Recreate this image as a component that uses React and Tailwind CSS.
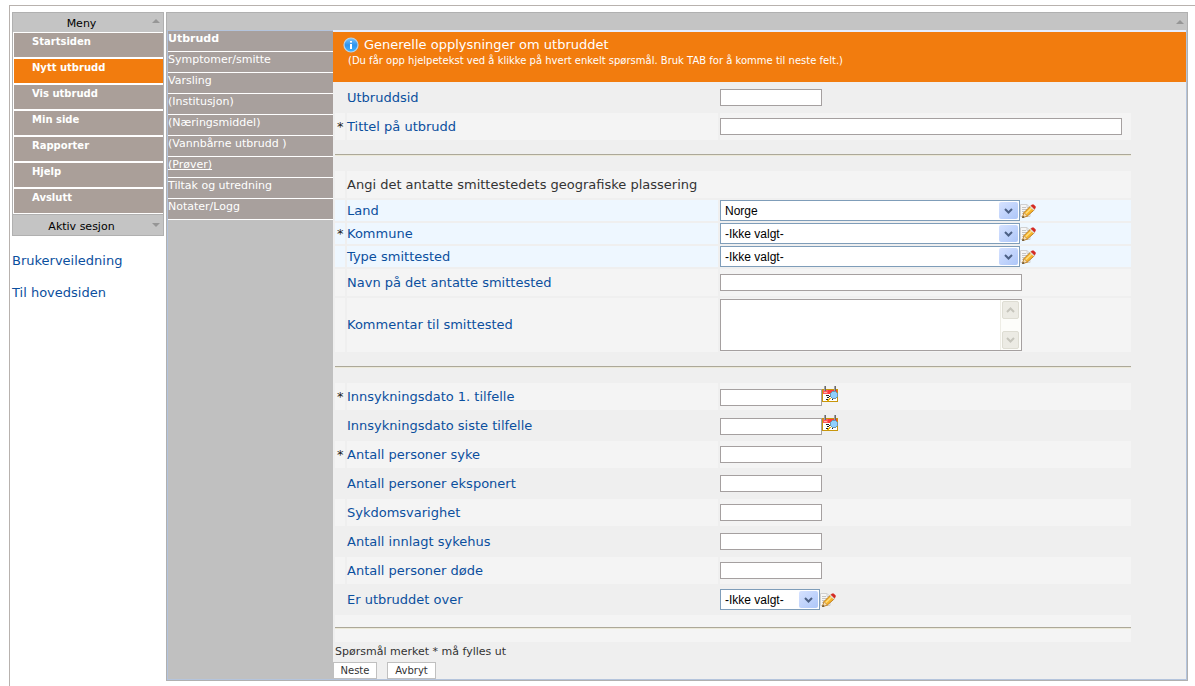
import { useState } from "react";

const menuItems = ["Startsiden", "Nytt utbrudd", "Vis utbrudd", "Min side", "Rapporter", "Hjelp", "Avslutt"];

const tabs = [
  "Utbrudd",
  "Symptomer/smitte",
  "Varsling",
  "(Institusjon)",
  "(Næringsmiddel)",
  "(Vannbårne utbrudd )",
  "(Prøver)",
  "Tiltak og utredning",
  "Notater/Logg",
];

const light = "bg-[#f4f4f4]";
const blue = "bg-[#eef7ff]";

function InfoIcon() {
  return (
    <svg width="16" height="16" viewBox="0 0 16 16" className="shrink-0" aria-hidden="true">
      <defs>
        <linearGradient id="info" x1="0" y1="0" x2="0" y2="1">
          <stop offset="0" stopColor="#7cc4f8" />
          <stop offset="0.5" stopColor="#2f94ee" />
          <stop offset="1" stopColor="#3fb4ff" />
        </linearGradient>
      </defs>
      <circle cx="8" cy="8" r="7" fill="url(#info)" stroke="#b9d3ea" strokeWidth="1.2" />
      <rect x="7" y="4" width="2" height="1.6" fill="#fff" />
      <path d="M7 7h2v5H7z" fill="#fff" />
    </svg>
  );
}

function EditIcon() {
  return (
    <svg width="16" height="16" viewBox="0 0 16 16" className="shrink-0" aria-hidden="true">
      <path d="M.5 1.5h6.5l3 3v9H.5z" fill="#f6f6f6" stroke="#d0d0d0" />
      <path d="M7 1.5v3h3" fill="none" stroke="#d0d0d0" />
      <path d="M2 4.5h4M2 6.5h5M2 8.5h3M2 10.5h2" stroke="#c4c4c4" />
      <path d="M2.6 14.4L4 9.6 10.6 3l4 3.6-7.4 6.6z" fill="#f7b52c" stroke="#b9771a" strokeWidth="0.9" />
      <path d="M5.6 10.8l6.8-6.6" stroke="#ffdf80" strokeWidth="1.4" />
      <path d="M2.6 14.4L4 9.6l3.4 3.5z" fill="#f3dcb4" stroke="#b9771a" strokeWidth="0.6" />
      <path d="M2.2 14.9l.8-2 1.4 1.3z" fill="#333" />
      <path d="M9.8 3.7l4 3.7 1-1-4-3.6z" fill="#dedede" />
      <path d="M10.7 2.8L12 1.4l1.7.1 2 2v1.4l-1.2 1.3z" fill="#d42a24" />
    </svg>
  );
}

function CalendarIcon() {
  return (
    <svg width="16" height="16" viewBox="0 0 16 16" shapeRendering="crispEdges" className="shrink-0" aria-hidden="true">
      <rect x="0" y="3" width="16" height="13" fill="#c8960c" />
      <rect x="1" y="4" width="14" height="11" fill="#fff" />
      <rect x="1" y="4" width="14" height="4" fill="#ff5a5a" />
      <rect x="6" y="4" width="9" height="4" fill="#ff3a3a" />
      <rect x="2" y="6" width="3" height="1" fill="#ffb0b0" />
      <rect x="2" y="0" width="1" height="5" fill="#a0a0a0" />
      <rect x="3" y="0" width="1" height="5" fill="#6a6a6a" />
      <rect x="12" y="0" width="1" height="5" fill="#a0a0a0" />
      <rect x="13" y="0" width="1" height="5" fill="#6a6a6a" />
      <path d="M4 9h3v1H4zM7 10h1v1H7zM5 11h2v1H5zM7 12h1v1H7zM4 13h3v1H4zM10 13h1v1h-1z" fill="#222" />
      <path d="M5 14h1v-1h1v-1h2v1H8v1H7v1H5z" fill="#f0b400" />
      <path d="M10 5h4v1h1v1h1v4h-1v1h-1v1h-4v-1H9v-1H8V7h1V6h1z" fill="#6f94ad" />
      <path d="M10 6h4v1h1v4h-1v1h-4v-1H9V7h1z" fill="#8fd0ff" />
    </svg>
  );
}

function Chevron({ up, color }) {
  return (
    <svg width="9" height="6" viewBox="0 0 9 6" aria-hidden="true">
      <path d={up ? "M1 5l3.5-3.5L8 5" : "M1 1l3.5 3.5L8 1"} fill="none" stroke={color} strokeWidth="2" />
    </svg>
  );
}

function Triangle({ up }) {
  return (
    <svg width="8" height="4" viewBox="0 0 8 4" aria-hidden="true">
      <path d={up ? "M0 4L4 0l4 4z" : "M0 0h8L4 4z"} fill="#969696" />
    </svg>
  );
}

function Row({ id, label, required, bg = "", children }) {
  return (
    <div className="grid grid-cols-[10px_371px_1fr] gap-0.5">
      <span className={`${bg} flex items-center pl-0.5 text-[13px] leading-4 text-[#222]`}>{required ? "*" : ""}</span>
      <label htmlFor={id} className={`${bg} flex items-center text-[13px] leading-4 text-[#0b4f9e]`}>
        {label}
      </label>
      <div className={`${bg} flex items-center`}>{children}</div>
    </div>
  );
}

function TextRow({ width = "w-[102px]", ...props }) {
  return (
    <Row {...props}>
      <div className="flex h-[27px] grow items-center">
        <input id={props.id} type="text" className={`${width} h-[17px] border border-[#a5a0a0] bg-white px-1 text-xs`} />
      </div>
    </Row>
  );
}

function DateRow(props) {
  return (
    <Row {...props}>
      <div className="flex h-[27px] items-start">
        <input id={props.id} type="text" className="mt-1.5 h-[17px] w-[102px] border border-[#a5a0a0] bg-white px-1 text-xs" />
        <button type="button" aria-label="Velg dato" className="mt-[3px]">
          <CalendarIcon />
        </button>
      </div>
    </Row>
  );
}

function SelectRow({ value, width = "w-[300px]", height = "h-[21px]", ...props }) {
  return (
    <Row {...props}>
      <div className={`${height} flex items-center`}>
        <div className={`${width} relative`}>
          <select
            id={props.id}
            className="block h-[21px] w-full appearance-none border border-[#7f9db9] bg-white pl-1 font-['Liberation_Sans',Arial,sans-serif] text-xs text-black"
          >
            <option>{value}</option>
          </select>
          <span className="pointer-events-none absolute top-0.5 right-0.5 flex h-[17px] w-[19px] items-center justify-center rounded-xs bg-gradient-to-br from-[#d6e2ff] to-[#adc6f8]">
            <Chevron color="#4d6185" />
          </span>
        </div>
        <button type="button" aria-label="Rediger">
          <EditIcon />
        </button>
      </div>
    </Row>
  );
}

function Divider({ bg = "" }) {
  return (
    <div className={`${bg} h-[27px] pt-3`}>
      <hr className="h-0.5 border-t border-b border-t-[#aca899] border-b-[#ece9d8]" />
    </div>
  );
}

function ScrollButton({ up }) {
  return (
    <span className="flex h-[18px] items-center justify-center rounded-xs border border-[#deddd3] bg-[#ecebe4]">
      <Chevron up={up} color="#c6c5bc" />
    </span>
  );
}

function Sidebar({ active, onSelect }) {
  return (
    <div className="w-[152px] shrink-0">
      <nav className="border border-[#b0b0b0] bg-[#c4c4c4] text-[11px] text-black">
        <div className="flex h-[19px] items-center">
          <span className="grow pt-0.5 pr-0.5 text-center leading-4">Meny</span>
          <span className="-mt-1 mr-[3px]">
            <Triangle up />
          </span>
        </div>
        <ul className="flex flex-col gap-0.5 border-t border-b border-l border-white bg-white">
          {menuItems.map((item) => (
            <li key={item}>
              <a
                href="#"
                onClick={() => onSelect(item)}
                className={`block h-6 pt-[3px] pl-[18px] text-[10px] leading-3 font-bold text-white ${
                  item === active ? "bg-[#f27c0e]" : "bg-[#aa9f99]"
                }`}
              >
                {item}
              </a>
            </li>
          ))}
        </ul>
        <div className="flex h-[21px] items-center border-t border-[#b0b0b0]">
          <span className="grow pt-1 pr-0.5 text-center leading-4">Aktiv sesjon</span>
          <span className="mr-[3px]">
            <Triangle />
          </span>
        </div>
      </nav>
      <div className="mt-[17px] flex flex-col gap-4 text-[13px] leading-4 text-[#0b4f9e]">
        <a href="#">Brukerveiledning</a>
        <a href="#">Til hovedsiden</a>
      </div>
    </div>
  );
}

function OutbreakForm() {
  return (
    <form className="min-w-0 grow bg-[#efefef]" onSubmit={(e) => e.preventDefault()}>
      <header className="h-[52px] border-t-2 border-[#e6eeff] bg-[#f27c0e] pl-2.5 text-white">
        <h1 className="flex items-center gap-[5px] pt-1 text-[13px] leading-[18px]">
          <InfoIcon />
          <span>Generelle opplysninger om utbruddet</span>
        </h1>
        <p className="pt-px pl-[5px] text-[10px] leading-3">
          (Du får opp hjelpetekst ved å klikke på hvert enkelt spørsmål. Bruk TAB for å komme til neste felt.)
        </p>
      </header>

      <div className="flex flex-col gap-0.5 pt-0.5 pr-[55px] pl-0.5">
        <TextRow id="utbruddsid" label="Utbruddsid" />
        <TextRow id="tittel" label="Tittel på utbrudd" required bg={light} width="w-[402px]" />
        <Divider />

        <div className="grid grid-cols-[10px_1fr] gap-0.5">
          <span className={light}></span>
          <p className={`${light} flex h-[27px] items-center text-[13px] text-[#333]`}>
            Angi det antatte smittestedets geografiske plassering
          </p>
        </div>
        <SelectRow id="land" label="Land" value="Norge" bg={blue} />
        <SelectRow id="kommune" label="Kommune" value="-Ikke valgt-" required bg={blue} />
        <SelectRow id="type" label="Type smittested" value="-Ikke valgt-" bg={blue} />
        <TextRow id="navn" label="Navn på det antatte smittested" bg={light} width="w-[302px]" />
        <Row id="kommentar" label="Kommentar til smittested" bg={light}>
          <div className="relative my-px w-[302px]">
            <textarea id="kommentar" className="block h-[52px] w-full resize-none border border-[#a5a0a0] bg-white px-1 text-xs"></textarea>
            <div className="absolute top-px right-px bottom-px flex w-[21px] flex-col justify-between border-l border-[#eeede5] bg-[#fdfdfa] py-px pr-0.5 pl-px">
              <ScrollButton up />
              <ScrollButton />
            </div>
          </div>
        </Row>
        <Divider />

        <DateRow id="forste" label="Innsykningsdato 1. tilfelle" required bg={light} />
        <DateRow id="siste" label="Innsykningsdato siste tilfelle" />
        <TextRow id="syke" label="Antall personer syke" required bg={light} />
        <TextRow id="eksponert" label="Antall personer eksponert" />
        <TextRow id="varighet" label="Sykdomsvarighet" bg={light} />
        <TextRow id="innlagt" label="Antall innlagt sykehus" />
        <TextRow id="dode" label="Antall personer døde" bg={light} />
        <SelectRow id="over" label="Er utbruddet over" value="-Ikke valgt-" width="w-[100px]" height="h-[27px]" />
        <Divider bg={light} />
      </div>

      <p className="pt-0.5 pl-0.5 text-[11px] leading-4 text-[#333]">Spørsmål merket * må fylles ut</p>
      <div className="flex gap-2.5 pt-0.5 text-[10px] leading-3 text-[#333]">
        <button type="submit" className="h-[17px] w-11 border border-[#c0c0c0] bg-white">
          Neste
        </button>
        <button type="button" className="h-[17px] w-[49px] border border-[#c0c0c0] bg-white">
          Avbryt
        </button>
      </div>
    </form>
  );
}

function App() {
  const [active, setActive] = useState("Nytt utbrudd");

  return (
    <div className="min-h-screen bg-white pt-[5px] pl-[9px] font-['DejaVu_Sans',Verdana,sans-serif]">
      <div className="flex min-h-[calc(100vh-5px)] items-start gap-0.5 border-t border-l border-[#b8b2ae] pt-1.5 pr-[7px] pl-0.5">
        <Sidebar active={active} onSelect={setActive} />

        <main className="min-w-0 grow border border-[#b0b0b0]">
          <div className="flex h-[17px] items-center justify-end bg-[#c4c4c4] pr-[3px]">
            <Triangle up />
          </div>
          <div className="flex border border-t-0 border-[#b4c4dc] bg-[#c0c0c0]">
            <ul className="w-[165px] shrink-0 border-t border-[#b4c4dc] text-[11px] leading-4 text-white">
              {tabs.map((tab, i) => (
                <li key={tab} className="h-[21px] border-b border-white bg-[#a8a09d]">
                  <a href="#" className={`${i === 0 ? "font-bold" : ""} ${tab === "(Prøver)" ? "underline" : ""}`}>
                    {tab}
                  </a>
                </li>
              ))}
            </ul>
            <OutbreakForm />
          </div>
        </main>
      </div>
    </div>
  );
}

export default App;
